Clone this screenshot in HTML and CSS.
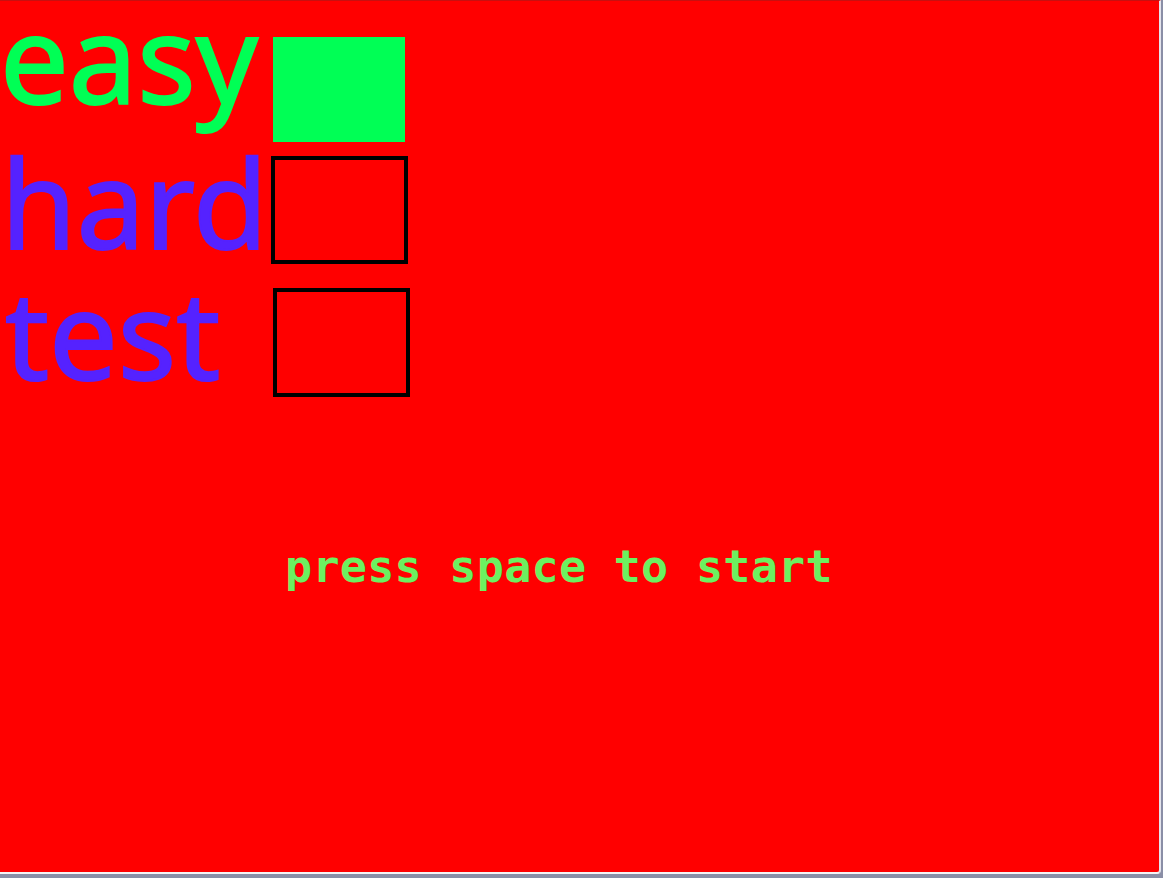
FILE: index.html
```html
<!DOCTYPE html>
<html>
<head>
<meta charset="utf-8">
<title>game</title>
<link rel="stylesheet" href="styles.css">
</head>
<body>
<div class="screen">
  <div class="menu">
    <div class="row row-easy">
      <div class="label label-easy">easy</div>
      <div class="box box-easy"></div>
    </div>
    <div class="row row-hard">
      <div class="label label-hard">hard</div>
      <div class="box box-hard"></div>
    </div>
    <div class="row row-test">
      <div class="label label-test">test</div>
      <div class="box box-test"></div>
    </div>
  </div>
  <div class="message">press space to start</div>
</div>
</body>
</html>
```
FILE: styles.css
```css
html, body {
  margin: 0;
  padding: 0;
}
body {
  width: 1163px;
  height: 878px;
  background: #8a8ea6;
  overflow: hidden;
}
.screen {
  box-sizing: border-box;
  width: 1161px;
  height: 874px;
  background: #ff0000;
  border-top: 1px solid #c81010;
  border-right: 2px solid #e4e4ec;
  border-bottom: 2px solid #f4f4f6;
  border-bottom-right-radius: 4px;
  overflow: hidden;
}
.menu {
  display: flex;
  flex-direction: column;
}
.row {
  display: flex;
  align-items: flex-start;
}
.label {
  width: 271px;
  flex: none;
  font-family: "Noto Sans", "Open Sans", sans-serif;
  font-weight: 400;
  font-size: 122px;
  line-height: 120px;
  white-space: nowrap;
  -webkit-text-stroke: 2px currentColor;
}
.label-easy {
  color: #00ff55;
  margin-top: -4px;
}
.label-hard, .label-test {
  color: #5522ff;
}
.label-hard {
  padding-left: 1px;
  width: 270px;
}
.label-test {
  padding-left: 5px;
  width: 266px;
}
.row-easy { height: 141px; }
.row-hard { height: 131px; }
.row-test { height: 124px; }

.box {
  flex: none;
  box-sizing: border-box;
}
.box-easy {
  margin-left: 2px;
  margin-top: 36px;
  width: 132px;
  height: 105px;
  background: #00ff55;
}
.box-hard {
  margin-top: 14px;
  width: 137px;
  height: 108px;
  border: 4px solid #000;
}
.box-test {
  margin-left: 2px;
  margin-top: 15px;
  width: 137px;
  height: 109px;
  border: 4px solid #000;
}
.message {
  margin-top: 147px;
  padding-left: 285px;
  font-family: "DejaVu Sans Mono", "Liberation Mono", monospace;
  font-weight: bold;
  font-size: 45px;
  line-height: 46px;
  letter-spacing: 0.3px;
  color: #6cf060;
  white-space: nowrap;
}
```
